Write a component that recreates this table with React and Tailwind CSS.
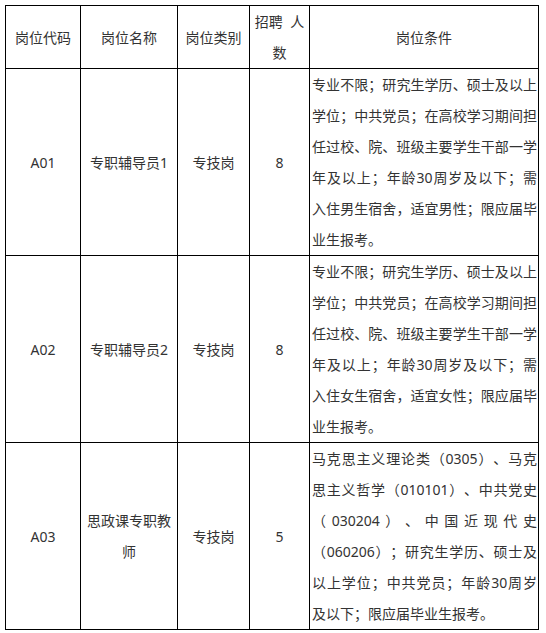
const rows = [
  {
    code: 'A01',
    name: '专职辅导员1',
    type: '专技岗',
    num: '8',
    cond: '专业不限；研究生学历、硕士及以上学位；中共党员；在高校学习期间担任过校、院、班级主要学生干部一学年及以上；年龄30周岁及以下；需入住男生宿舍，适宜男性；限应届毕业生报考。',
  },
  {
    code: 'A02',
    name: '专职辅导员2',
    type: '专技岗',
    num: '8',
    cond: '专业不限；研究生学历、硕士及以上学位；中共党员；在高校学习期间担任过校、院、班级主要学生干部一学年及以上；年龄30周岁及以下；需入住女生宿舍，适宜女性；限应届毕业生报考。',
  },
  {
    code: 'A03',
    name: '思政课专职教师',
    type: '专技岗',
    num: '5',
    cond: '马克思主义理论类（0305）、马克思主义哲学（010101）、中共党史（030204）、中国近现代史（060206）；研究生学历、硕士及以上学位；中共党员；年龄30周岁及以下；限应届毕业生报考。',
  },
];

const cell = 'border border-black align-middle text-center px-[1px]';

export default function App() {
  return (
    <div
      className="bg-white w-[546px] h-[633px] pt-[5px] pl-[5px] text-[14px] leading-[31px] text-[#333] [text-spacing-trim:space-all]"
      style={{ fontFamily: '"Noto Sans", "Noto Sans CJK SC", sans-serif' }}
    >
      <table className="border-collapse table-fixed w-[533px]">
        <colgroup>
          <col className="w-[75px]" />
          <col className="w-[97px]" />
          <col className="w-[72px]" />
          <col className="w-[60px]" />
          <col className="w-[229px]" />
        </colgroup>
        <thead>
          <tr className="h-[63px]">
            <th className={cell + ' font-normal'}>岗位代码</th>
            <th className={cell + ' font-normal'}>岗位名称</th>
            <th className={cell + ' font-normal'}>岗位类别</th>
            <th className={cell + ' font-normal'}>招聘{'\u00a0'} 人数</th>
            <th className={cell + ' font-normal'}>岗位条件</th>
          </tr>
        </thead>
        <tbody>
          {rows.map((r) => (
            <tr key={r.code} className="h-[187px]">
              <td className={cell}>{r.code}</td>
              <td className={cell}>{r.name}</td>
              <td className={cell}>{r.type}</td>
              <td className={cell}>{r.num}</td>
              <td className="border border-black align-middle text-justify pl-[2px] pr-[1px]">{r.cond}</td>
            </tr>
          ))}
        </tbody>
      </table>
    </div>
  );
}
